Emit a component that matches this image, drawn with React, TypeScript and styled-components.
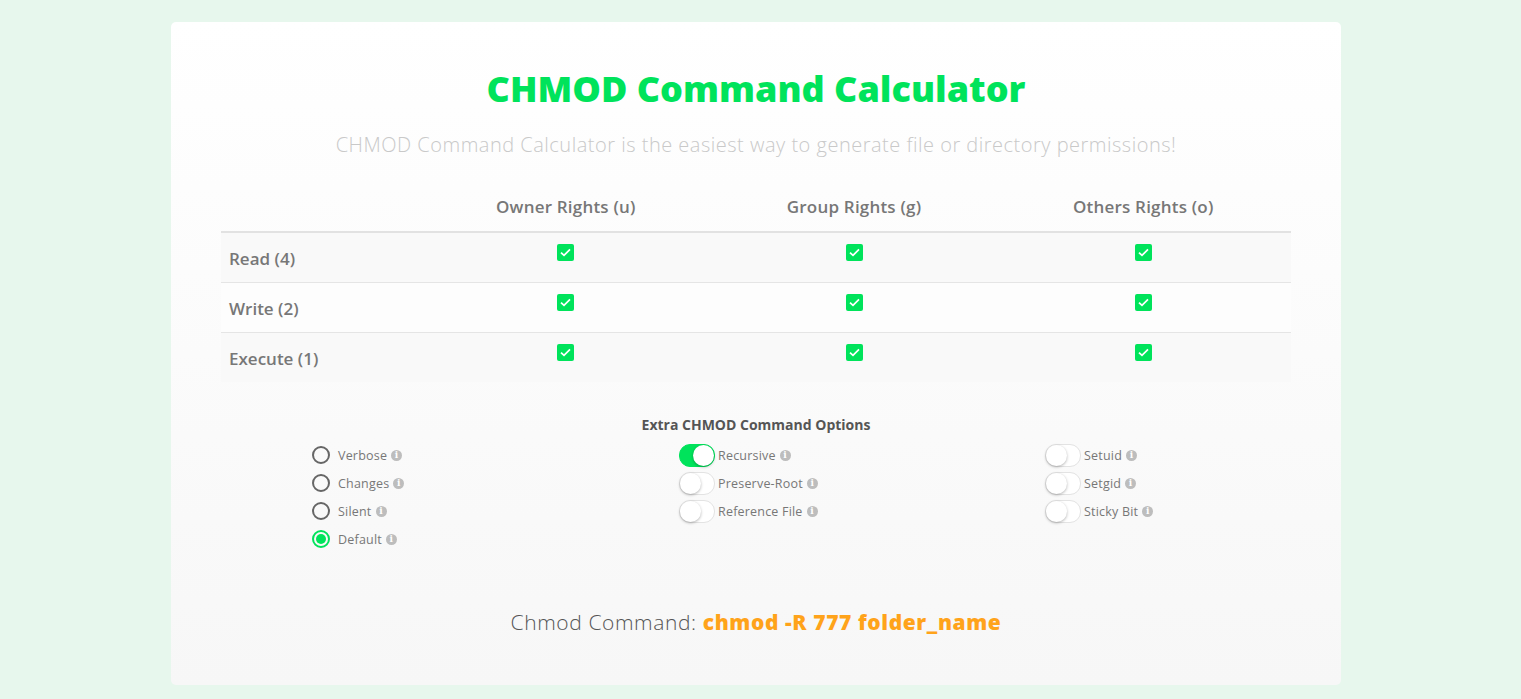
import React, { useState } from 'react'
import styled, { createGlobalStyle } from 'styled-components'

const Global = createGlobalStyle`
  html, body { margin: 0; padding: 0; }
  body {
    background: #e7f7ed;
    font-family: "Open Sans", "Noto Sans", sans-serif;
  }
`

const Page = styled.div`
  padding: 22px 0 12px;
  display: flex;
  justify-content: center;
`

const Card = styled.section`
  width: 1170px;
  box-sizing: border-box;
  margin-left: -9px;
  padding: 44px 50px 49px;
  border-radius: 5px;
  background: linear-gradient(to bottom, #ffffff 0%, #f7f7f7 100%);
  display: flex;
  flex-direction: column;
  align-items: center;
`

const Title = styled.h1`
  margin: 0;
  font-weight: 800;
  font-size: 36px;
  line-height: 46px;
  color: #00e35b;
`

const Subtitle = styled.p`
  margin: 19px 0 0;
  font-weight: 300;
  font-size: 20px;
  letter-spacing: 0.5px;
  color: #c9c9c9;
`

const Table = styled.table`
  margin-top: 23px;
  width: 100%;
  border-collapse: collapse;
  th {
    font-weight: 600;
    font-size: 17px;
    letter-spacing: 0.2px;
    color: #777;
    height: 50px;
    padding: 0;
    vertical-align: middle;
    border-bottom: 2px solid #e2e2e2;
  }
  th:first-child { width: 198px; }
  tbody tr { height: 50px; }
  td {
    padding: 0;
    line-height: 1;
    border-top: 1px solid #e5e5e5;
  }
  tbody tr:first-child td { border-top: none; }
  tbody tr:nth-child(odd) { background: #f9f9f9; }
  tbody tr:nth-child(even) { background: #fdfdfd; }
`

const RowLabel = styled.td`
  padding-left: 8px !important;
  padding-top: 3px !important;
  font-weight: 600;
  font-size: 17px;
  color: #777;
  vertical-align: middle;
`

const BoxCell = styled.td`
  vertical-align: top;
  padding-top: 11px !important;
`

const Check = styled.span<{ $on: boolean }>`
  display: flex;
  margin: 0 auto;
  width: 17px;
  height: 17px;
  box-sizing: border-box;
  border-radius: 2px;
  background: ${p => (p.$on ? '#00e35b' : '#fff')};
  border: ${p => (p.$on ? 'none' : '1px solid #bbb')};
  align-items: center;
  justify-content: center;
  cursor: pointer;
`

const OptionsTitle = styled.h3`
  margin: 33px 0 0;
  font-weight: 700;
  font-size: 14px;
  color: #555;
`

const Options = styled.div`
  margin-top: 7px;
  width: 100%;
  display: grid;
  grid-template-columns: 367px 366px 200px;
  padding-left: 91px;
  box-sizing: border-box;
`

const Column = styled.div`
  display: flex;
  flex-direction: column;
`

const Option = styled.label`
  display: flex;
  align-items: center;
  height: 28px;
  font-size: 12.5px;
  color: #777;
  letter-spacing: 0.2px;
  cursor: pointer;
`

const Radio = styled.span<{ $on: boolean }>`
  width: 14px;
  height: 14px;
  border-radius: 50%;
  border: 2px solid ${p => (p.$on ? '#00e35b' : '#666')};
  margin-right: 8px;
  display: flex;
  align-items: center;
  justify-content: center;
  &::after {
    content: '';
    width: 10px;
    height: 10px;
    border-radius: 50%;
    background: ${p => (p.$on ? '#00e35b' : 'transparent')};
  }
`

const Toggle = styled.span<{ $on: boolean }>`
  position: relative;
  width: 34px;
  height: 21px;
  border-radius: 11px;
  margin-right: 3px;
  background: ${p => (p.$on ? '#00e35b' : '#fff')};
  border: 1px solid ${p => (p.$on ? '#00e35b' : '#e3e3e3')};
  &::after {
    content: '';
    position: absolute;
    top: 0;
    left: ${p => (p.$on ? '13px' : '0')};
    width: 21px;
    height: 21px;
    border-radius: 50%;
    background: #fff;
    box-shadow: 0 1px 3px rgba(0, 0, 0, 0.3);
  }
`

const Info = styled.span`
  display: inline-flex;
  width: 11px;
  height: 11px;
  margin-left: 4px;
  border-radius: 50%;
  background: #bdbdbd;
  color: #fff;
  font-family: "DejaVu Serif", serif;
  font-weight: 700;
  font-size: 9px;
  align-items: center;
  justify-content: center;
`

const Command = styled.p`
  margin: 55px 0 0;
  font-weight: 300;
  font-size: 21px;
  letter-spacing: 0.6px;
  color: #555;
  b {
    font-weight: 800;
    color: #ffa31a;
  }
`

const rows = [
  { name: 'Read', value: 4 },
  { name: 'Write', value: 2 },
  { name: 'Execute', value: 1 },
]

const groups = ['Owner Rights (u)', 'Group Rights (g)', 'Others Rights (o)']

function Tick() {
  return (
    <svg width="11" height="9" viewBox="0 0 11 9">
      <path d="M1 4.6 L4 7.4 L10 1.4" fill="none" stroke="#fff" strokeWidth="1.7" />
    </svg>
  )
}

export default function App() {
  const [bits, setBits] = useState<boolean[][]>(rows.map(() => groups.map(() => true)))
  const [mode, setMode] = useState('Default')
  const [flags, setFlags] = useState<Record<string, boolean>>({ Recursive: true })

  const digits = groups.map((_, g) =>
    rows.reduce((sum, r, i) => sum + (bits[i][g] ? r.value : 0), 0)
  )
  const opts =
    (flags.Recursive ? ' -R' : '') +
    (mode === 'Verbose' ? ' -v' : mode === 'Changes' ? ' -c' : mode === 'Silent' ? ' -f' : '')

  const flip = (i: number, g: number) =>
    setBits(b => b.map((row, ri) => row.map((v, gi) => (ri === i && gi === g ? !v : v))))

  return (
    <>
      <Global />
      <Page>
        <Card>
          <Title>CHMOD Command Calculator</Title>
          <Subtitle>CHMOD Command Calculator is the easiest way to generate file or directory permissions!</Subtitle>
          <Table>
            <thead>
              <tr>
                <th />
                {groups.map(g => <th key={g}>{g}</th>)}
              </tr>
            </thead>
            <tbody>
              {rows.map((r, i) => (
                <tr key={r.name}>
                  <RowLabel>{r.name} ({r.value})</RowLabel>
                  {groups.map((g, gi) => (
                    <BoxCell key={g}>
                      <Check $on={bits[i][gi]} onClick={() => flip(i, gi)}>
                        {bits[i][gi] && <Tick />}
                      </Check>
                    </BoxCell>
                  ))}
                </tr>
              ))}
            </tbody>
          </Table>

          <OptionsTitle>Extra CHMOD Command Options</OptionsTitle>
          <Options>
            <Column>
              {['Verbose', 'Changes', 'Silent', 'Default'].map(m => (
                <Option key={m} onClick={() => setMode(m)}>
                  <Radio $on={mode === m} />
                  {m}
                  <Info>i</Info>
                </Option>
              ))}
            </Column>
            <Column>
              {['Recursive', 'Preserve-Root', 'Reference File'].map(f => (
                <Option key={f} onClick={() => setFlags(s => ({ ...s, [f]: !s[f] }))}>
                  <Toggle $on={!!flags[f]} />
                  {f}
                  <Info>i</Info>
                </Option>
              ))}
            </Column>
            <Column>
              {['Setuid', 'Setgid', 'Sticky Bit'].map(f => (
                <Option key={f} onClick={() => setFlags(s => ({ ...s, [f]: !s[f] }))}>
                  <Toggle $on={!!flags[f]} />
                  {f}
                  <Info>i</Info>
                </Option>
              ))}
            </Column>
          </Options>

          <Command>
            Chmod Command: <b>chmod{opts} {digits.join('')} folder_name</b>
          </Command>
        </Card>
      </Page>
    </>
  )
}
